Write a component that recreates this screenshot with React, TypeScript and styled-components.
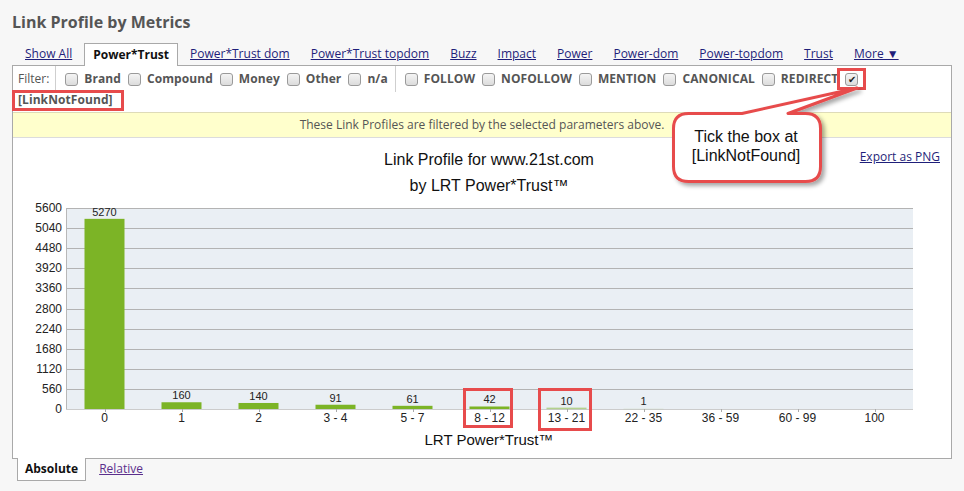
import React from 'react';
import styled, { createGlobalStyle } from 'styled-components';

const colors = {
  page: '#f7f7f7',
  text: '#555555',
  link: '#1f1f7a',
  visited: '#5b2f8c',
  border: '#a9a9a9',
  red: '#e74b4c',
  green: '#7cb426',
  plot: '#eaeff4',
  grid: '#b3b3b3',
};

const GlobalStyle = createGlobalStyle`
  html, body {
    margin: 0;
    padding: 0;
    background: ${colors.page};
  }
  body {
    font-family: 'Open Sans', 'Liberation Sans', sans-serif;
  }
`;

const Page = styled.div`
  position: relative;
  width: 964px;
  height: 491px;
  padding: 0 12px;
  box-sizing: border-box;
  overflow: hidden;
`;

const Heading = styled.h1`
  margin: 0 0 9px;
  padding-top: 10px;
  font-size: 16px;
  line-height: 24px;
  font-weight: 700;
  color: ${colors.text};
`;

const TabBar = styled.div`
  display: flex;
  align-items: flex-end;
  gap: 3px;
  padding-left: 4px;
  height: 22px;
`;

const Tab = styled.a<{ $active?: boolean }>`
  position: relative;
  z-index: 1;
  padding: 0 ${(p) => (p.$active ? 8 : 9)}px;
  font-size: 12px;
  line-height: 22px;
  height: ${(p) => (p.$active ? 23 : 22)}px;
  margin-bottom: ${(p) => (p.$active ? -1 : 0)}px;
  box-sizing: border-box;
  white-space: nowrap;
  color: ${(p) => (p.$active ? '#111' : colors.link)};
  font-weight: ${(p) => (p.$active ? 700 : 400)};
  text-decoration: ${(p) => (p.$active ? 'none' : 'underline')};
  background: ${(p) => (p.$active ? '#fff' : 'transparent')};
  border: ${(p) => (p.$active ? `1px solid ${colors.border}` : 'none')};
  border-bottom: none;
`;

const Panel = styled.div`
  background: #fff;
  border: 1px solid ${colors.border};
`;

const FilterBar = styled.div`
  display: flex;
  flex-wrap: wrap;
  align-items: center;
  align-content: flex-start;
  height: 46px;
  box-sizing: border-box;
  padding: 1px 0 0 5px;
  font-size: 12px;
  color: ${colors.text};
`;

const FilterLabel = styled.span`
  line-height: 24px;
  margin-right: 6px;
`;

const Separator = styled.span`
  align-self: flex-start;
  width: 0;
  height: 26px;
  margin: -1px 9px -2px 0;
  border-left: 1px solid #cfcfcf;
`;

const Box = styled.span<{ $checked?: boolean; $marked?: boolean }>`
  position: relative;
  width: 13px;
  height: 13px;
  box-sizing: border-box;
  margin-right: 6px;
  border: 1px solid #9a9a9a;
  border-radius: 3px;
  background: linear-gradient(#f4f4f4, #dcdcdc);
  display: flex;
  align-items: center;
  justify-content: center;
  font-size: 10px;
  line-height: 1;
  color: #222;
  &::after {
    content: '';
    display: ${(p) => (p.$marked ? 'block' : 'none')};
    position: absolute;
    left: -9px;
    right: -9px;
    top: -6px;
    bottom: -5px;
    border: 3px solid ${colors.red};
  }
`;

const OptionLabel = styled.span<{ $marked?: boolean }>`
  position: relative;
  font-weight: 700;
  letter-spacing: 0.08px;
  line-height: ${(p) => (p.$marked ? 18 : 24)}px;
  margin-right: 7px;
  white-space: nowrap;
  &::after {
    content: '';
    display: ${(p) => (p.$marked ? 'block' : 'none')};
    position: absolute;
    left: -6px;
    right: -11px;
    top: -1px;
    bottom: -2px;
    border: 3px solid ${colors.red};
  }
`;

const Notice = styled.div`
  height: 26px;
  box-sizing: border-box;
  border-top: 1px solid #dedbb8;
  border-bottom: 1px solid #dcdcdc;
  background: #ffffcc;
  text-align: center;
  font-size: 12px;
  line-height: 24px;
  color: ${colors.text};
`;

const ChartArea = styled.div`
  position: relative;
  height: 320px;
`;

const ExportLink = styled.a`
  position: absolute;
  right: 11px;
  top: 10px;
  font-size: 12px;
  color: ${colors.link};
  text-decoration: underline;
`;

const ChartSvg = styled.svg`
  display: block;
  font-family: 'Liberation Sans', Arial, sans-serif;
`;

const BottomTabs = styled.div`
  display: flex;
  align-items: flex-start;
  gap: 4px;
  padding-left: 5px;
  margin-top: -1px;
`;

const ModeTab = styled.a<{ $active?: boolean }>`
  position: relative;
  padding: 0 ${(p) => (p.$active ? 7 : 9)}px;
  height: 23px;
  box-sizing: border-box;
  font-size: 12px;
  line-height: 22px;
  font-weight: ${(p) => (p.$active ? 700 : 400)};
  color: ${(p) => (p.$active ? '#111' : colors.visited)};
  text-decoration: ${(p) => (p.$active ? 'none' : 'underline')};
  background: ${(p) => (p.$active ? '#fff' : 'transparent')};
  border: ${(p) => (p.$active ? `1px solid ${colors.border}` : 'none')};
  border-top: none;
`;

const CalloutLayer = styled.svg`
  position: absolute;
  left: 660px;
  top: 78px;
  overflow: visible;
  font-family: 'Liberation Sans', Arial, sans-serif;
`;

const tabs = [
  'Show All',
  'Power*Trust',
  'Power*Trust dom',
  'Power*Trust topdom',
  'Buzz',
  'Impact',
  'Power',
  'Power-dom',
  'Power-topdom',
  'Trust',
  'More ▼',
];

const anchorOptions = ['Brand', 'Compound', 'Money', 'Other', 'n/a'];
const linkOptions = ['FOLLOW', 'NOFOLLOW', 'MENTION', 'CANONICAL', 'REDIRECT'];

const categories = ['0', '1', '2', '3 - 4', '5 - 7', '8 - 12', '13 - 21', '22 - 35', '36 - 59', '60 - 99', '100'];
const values: (number | null)[] = [5270, 160, 140, 91, 61, 42, 10, 1, null, null, null];

// plot box in page coordinates (svg viewBox uses the same numbers)
const plot = { left: 66, right: 913, top: 207, bottom: 408 };
const maxValue = 5600;
const step = (plot.right - plot.left) / categories.length;

const yFor = (v: number) => plot.bottom - (v / maxValue) * (plot.bottom - plot.top);

const Chart: React.FC = () => {
  const ticks = Array.from({ length: 11 }, (_, i) => i * 560);
  return (
    <ChartSvg width={938} height={320} viewBox="13 137 938 320">
      <text x={489} y={160} fontSize={16} textAnchor="middle" dominantBaseline="middle" fill="#111">
        Link Profile for www.21st.com
      </text>
      <text x={489} y={186} fontSize={16} textAnchor="middle" dominantBaseline="middle" fill="#111">
        by LRT Power*Trust™
      </text>

      <rect x={plot.left} y={plot.top} width={plot.right - plot.left} height={plot.bottom - plot.top} fill={colors.plot} />
      {ticks.map((t) => {
        const y = Math.round(yFor(t)) + 0.5;
        return (
          <g key={t}>
            {t > 0 && <line x1={plot.left} x2={plot.right} y1={y} y2={y} stroke={colors.grid} />}
            <text x={62} y={y} fontSize={12} textAnchor="end" dominantBaseline="middle" fill="#222">
              {t}
            </text>
          </g>
        );
      })}
      <line x1={plot.left + 0.5} x2={plot.left + 0.5} y1={plot.top} y2={plot.bottom} stroke="#b8b8b8" />
      <line x1={plot.left} x2={plot.right} y1={plot.bottom + 0.5} y2={plot.bottom + 0.5} stroke="#cccccc" />

      {categories.map((c, i) => {
        const cx = plot.left + step * (i + 0.5);
        const v = values[i];
        const h = v == null ? 0 : (v / maxValue) * (plot.bottom - plot.top) + 1;
        const top = plot.bottom - h;
        return (
          <g key={c}>
            <line x1={Math.round(cx) + 0.5} x2={Math.round(cx) + 0.5} y1={plot.bottom} y2={plot.bottom + 3} stroke="#aaa" />
            {v != null && (
              <>
                <rect x={cx - 20} y={top} width={40} height={Math.max(h, 1.5)} fill={colors.green} opacity={Math.min(1, v / 20)} />
                <text x={cx} y={Math.min(top - 6, 401)} fontSize={11} textAnchor="middle" dominantBaseline="middle" fill="#222">
                  {v}
                </text>
              </>
            )}
            <text x={cx} y={418} fontSize={12} textAnchor="middle" dominantBaseline="middle" fill="#222">
              {c}
            </text>
          </g>
        );
      })}

      <text x={489} y={440} fontSize={15} textAnchor="middle" dominantBaseline="middle" fill="#111">
        LRT Power*Trust™
      </text>

      <rect x={464.5} y={388.5} width={47} height={37} fill="none" stroke={colors.red} strokeWidth={3} />
      <rect x={539.5} y={388.5} width={51} height={40} fill="none" stroke={colors.red} strokeWidth={3} />
    </ChartSvg>
  );
};

const Callout: React.FC = () => (
  <CalloutLayer width={220} height={120} viewBox="660 78 220 120">
    <defs>
      <filter id="calloutShadow" x="-20%" y="-20%" width="150%" height="150%">
        <feDropShadow dx={3} dy={3} stdDeviation={2} floodColor="#000" floodOpacity={0.35} />
      </filter>
    </defs>
    <path
      d="M688.5 113.5 L742 113.5 L857 88 L788 113.5 L805.5 113.5 Q820.5 113.5 820.5 128.5 L820.5 166.5 Q820.5 181.5 805.5 181.5 L688.5 181.5 Q673.5 181.5 673.5 166.5 L673.5 128.5 Q673.5 113.5 688.5 113.5 Z"
      fill="#fff"
      stroke={colors.red}
      strokeWidth={3}
      strokeLinejoin="round"
      filter="url(#calloutShadow)"
    />
    <text x={746} y={138} fontSize={16} textAnchor="middle" dominantBaseline="middle" fill="#111">
      Tick the box at
    </text>
    <text x={746} y={157} fontSize={16} textAnchor="middle" dominantBaseline="middle" fill="#111">
      [LinkNotFound]
    </text>
  </CalloutLayer>
);

const App: React.FC = () => (
  <Page>
    <GlobalStyle />
    <Heading>Link Profile by Metrics</Heading>
    <TabBar>
      {tabs.map((t) => (
        <Tab key={t} $active={t === 'Power*Trust'}>
          {t}
        </Tab>
      ))}
    </TabBar>
    <Panel>
      <FilterBar>
        <FilterLabel>Filter:</FilterLabel>
        <Separator />
        {anchorOptions.map((o) => (
          <React.Fragment key={o}>
            <Box />
            <OptionLabel>{o}</OptionLabel>
          </React.Fragment>
        ))}
        <Separator />
        {linkOptions.map((o) => (
          <React.Fragment key={o}>
            <Box />
            <OptionLabel>{o}</OptionLabel>
          </React.Fragment>
        ))}
        <Box $checked $marked>✔</Box>
        <OptionLabel $marked>[LinkNotFound]</OptionLabel>
      </FilterBar>
      <Notice>These Link Profiles are filtered by the selected parameters above.</Notice>
      <ChartArea>
        <ExportLink>Export as PNG</ExportLink>
        <Chart />
      </ChartArea>
    </Panel>
    <BottomTabs>
      <ModeTab $active>Absolute</ModeTab>
      <ModeTab>Relative</ModeTab>
    </BottomTabs>
    <Callout />
  </Page>
);

export default App;
